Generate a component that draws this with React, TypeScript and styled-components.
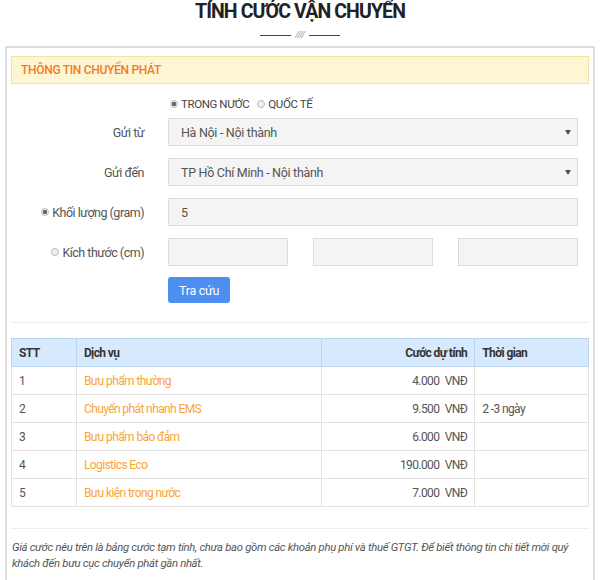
import React from "react";
import styled, { createGlobalStyle } from "styled-components";

const Global = createGlobalStyle`
  html, body { margin: 0; padding: 0; background: #fff; }
  body { font-family: Roboto, "Noto Sans", Arial, sans-serif; color: #555; }
  * { box-sizing: border-box; }
`;

const Page = styled.div`
  width: 600px;
  padding: 0 5px;
`;

const Title = styled.h1`
  margin: 0;
  font-size: 19.5px;
  line-height: 24px;
  font-weight: 700;
  color: #222;
  text-align: center;
  letter-spacing: -0.9px;
`;

const Divider = styled.div`
  display: flex;
  align-items: center;
  justify-content: center;
  gap: 4px;
  height: 22px;
`;

const DividerLine = styled.span`
  width: 31px;
  height: 1px;
  background: #444;
`;

const DividerMark = styled.span`
  font-size: 9px;
  font-style: italic;
  color: #999;
  letter-spacing: -0.5px;
  line-height: 9px;
`;

const Card = styled.div`
  border: 2px solid #dedede;
  padding: 8px 4px 9px 4px;
`;

const Heading = styled.div`
  height: 28px;
  display: flex;
  align-items: center;
  padding-left: 9px;
  background: #fdf6d3;
  border: 1px solid #f2e4a8;
  color: #f07c26;
  font-size: 12px;
  font-weight: 500;
  text-transform: uppercase;
  letter-spacing: -0.3px;
`;

const Form = styled.div`
  display: grid;
  grid-template-columns: 133px 410px;
  column-gap: 24px;
  row-gap: 12px;
  align-items: center;
  padding-top: 13px;
`;

const Label = styled.label`
  display: flex;
  align-items: center;
  justify-content: flex-end;
  gap: 3px;
  font-size: 12.5px;
  color: #555;
  letter-spacing: -0.5px;
`;

const RadioGroup = styled.div`
  grid-column: 2;
  display: flex;
  align-items: center;
  gap: 8px;
  height: 14px;
  margin-bottom: -5px;
  margin-left: 2px;
`;

const RadioItem = styled.span`
  display: flex;
  align-items: center;
  gap: 3px;
  font-size: 11.5px;
  color: #444;
  letter-spacing: -0.4px;
`;

const Radio = styled.span<{ $checked?: boolean }>`
  width: 8px;
  height: 8px;
  border-radius: 50%;
  border: 1px solid #bbb;
  background: ${(p) => (p.$checked ? "radial-gradient(circle, #666 0 2px, #eee 2.5px)" : "#eee")};
  flex: none;
`;

const Field = styled.div`
  position: relative;
  height: 28px;
  background: #f4f4f4;
  border: 1px solid #dcdcdc;
  display: flex;
  align-items: center;
  padding-left: 12px;
  font-size: 12.5px;
  color: #555;
  letter-spacing: -0.3px;
`;

const Arrow = styled.span`
  position: absolute;
  right: 6px;
  top: 11px;
  width: 0;
  height: 0;
  border-left: 3px solid transparent;
  border-right: 3px solid transparent;
  border-top: 5px solid #4a5060;
`;

const Triple = styled.div`
  display: grid;
  grid-template-columns: 120px 120px 120px;
  justify-content: space-between;
`;

const Button = styled.button`
  width: 62px;
  height: 26px;
  border: none;
  border-radius: 3px;
  background: #4c8ff0;
  color: #fff;
  font-family: inherit;
  font-size: 12.5px;
  letter-spacing: -0.3px;
  padding: 0;
  margin-top: -1px;
`;

const Rule = styled.div<{ $top: number; $bottom: number }>`
  height: 1px;
  background: #eeeeee;
  margin: ${(p) => p.$top}px 0 ${(p) => p.$bottom}px;
`;

const Table = styled.table`
  width: 578px;
  border-collapse: collapse;
  font-size: 12px;
  letter-spacing: -0.6px;
`;

const Th = styled.th<{ $w: number; $right?: boolean }>`
  width: ${(p) => p.$w}px;
  height: 28px;
  padding: 0 7px;
  background: #d7e9fc;
  border: 1px solid #b9d5f1;
  text-align: ${(p) => (p.$right ? "right" : "left")};
  font-weight: 700;
  color: #333;
`;

const Td = styled.td<{ $right?: boolean; $link?: boolean }>`
  height: 28px;
  padding: 0 7px;
  border: 1px solid #e2e2e2;
  text-align: ${(p) => (p.$right ? "right" : "left")};
  color: ${(p) => (p.$link ? "#f7a43c" : "#555")};
  word-spacing: ${(p) => (p.$right ? "3px" : "0")};
`;

const Note = styled.p`
  margin: 0 0 0 1px;
  font-size: 11.3px;
  line-height: 16px;
  font-style: italic;
  color: #555;
  letter-spacing: -0.3px;
`;

const rows = [
  { stt: 1, name: "Bưu phẩm thường", price: "4.000", time: "" },
  { stt: 2, name: "Chuyển phát nhanh EMS", price: "9.500", time: "2 -3 ngày" },
  { stt: 3, name: "Bưu phẩm bảo đảm", price: "6.000", time: "" },
  { stt: 4, name: "Logistics Eco", price: "190.000", time: "" },
  { stt: 5, name: "Bưu kiện trong nước", price: "7.000", time: "" },
];

export default function App() {
  return (
    <Page>
      <Global />
      <Title>TÍNH CƯỚC VẬN CHUYỂN</Title>
      <Divider>
        <DividerLine />
        <DividerMark>////</DividerMark>
        <DividerLine />
      </Divider>
      <Card>
        <Heading>Thông tin chuyển phát</Heading>
        <Form>
          <RadioGroup>
            <RadioItem>
              <Radio $checked />
              TRONG NƯỚC
            </RadioItem>
            <RadioItem>
              <Radio />
              QUỐC TẾ
            </RadioItem>
          </RadioGroup>
          <Label>Gửi từ</Label>
          <Field>
            Hà Nội - Nội thành
            <Arrow />
          </Field>
          <Label>Gửi đến</Label>
          <Field>
            TP Hồ Chí Minh - Nội thành
            <Arrow />
          </Field>
          <Label>
            <Radio $checked />
            Khối lượng (gram)
          </Label>
          <Field>5</Field>
          <Label>
            <Radio />
            Kích thước (cm)
          </Label>
          <Triple>
            <Field />
            <Field />
            <Field />
          </Triple>
          <span />
          <div>
            <Button>Tra cứu</Button>
          </div>
        </Form>
        <Rule $top={19} $bottom={15} />
        <Table>
          <thead>
            <tr>
              <Th $w={65}>STT</Th>
              <Th $w={246}>Dịch vụ</Th>
              <Th $w={153} $right>
                Cước dự tính
              </Th>
              <Th $w={114}>Thời gian</Th>
            </tr>
          </thead>
          <tbody>
            {rows.map((r) => (
              <tr key={r.stt}>
                <Td>{r.stt}</Td>
                <Td $link>{r.name}</Td>
                <Td $right>{r.price} VNĐ</Td>
                <Td>{r.time}</Td>
              </tr>
            ))}
          </tbody>
        </Table>
        <Rule $top={21} $bottom={11} />
        <Note>
          Giá cước nêu trên là bảng cước tạm tính, chưa bao gồm các khoản phụ phí và thuế GTGT. Để biết thông tin chi tiết mời quý
          khách đến bưu cục chuyển phát gần nhất.
        </Note>
      </Card>
    </Page>
  );
}
